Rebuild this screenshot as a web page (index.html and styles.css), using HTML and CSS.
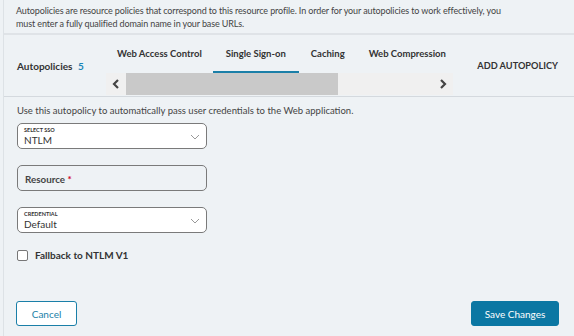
FILE: index.html
```html
<!DOCTYPE html>
<html lang="en">
<head>
    <meta charset="UTF-8">
    <title>Autopolicies</title>
    <link rel="stylesheet" href="styles.css">
</head>
<body>
    <div class="panel">
        <div class="intro">
            Autopolicies are resource policies that correspond to this resource profile. In order for your autopolicies to work effectively, you
            must enter a fully qualified domain name in your base URLs.
        </div>

        <div class="tabbar">
            <div class="title">Autopolicies <span class="count">5</span></div>
            <div class="tabs-wrap">
                <div class="tabs">
                    <div class="tab">Web Access Control</div>
                    <div class="tab active">Single Sign-on</div>
                    <div class="tab">Caching</div>
                    <div class="tab">Web Compression</div>
                </div>
                <div class="scroller">
                    <span class="arrow">
                        <svg width="10" height="10" viewBox="0 0 10 10"><path d="M7 1 L3 5 L7 9" fill="none" stroke="#444" stroke-width="2.2"/></svg>
                    </span>
                    <span class="thumb"></span>
                    <span class="track"></span>
                    <span class="arrow">
                        <svg width="10" height="10" viewBox="0 0 10 10"><path d="M3 1 L7 5 L3 9" fill="none" stroke="#444" stroke-width="2.2"/></svg>
                    </span>
                </div>
            </div>
            <div class="add">ADD AUTOPOLICY</div>
        </div>

        <div class="body">
            <p class="hint">Use this autopolicy to automatically pass user credentials to the Web application.</p>

            <div class="field select">
                <div class="label">SELECT SSO</div>
                <div class="value">NTLM</div>
                <svg class="chev" width="10" height="6" viewBox="0 0 10 6"><path d="M1 1 L5 5 L9 1" fill="none" stroke="#999" stroke-width="1"/></svg>
            </div>

            <div class="field input">
                <span>Resource</span> <span class="req">*</span>
            </div>

            <div class="field select">
                <div class="label">CREDENTIAL</div>
                <div class="value">Default</div>
                <svg class="chev" width="10" height="6" viewBox="0 0 10 6"><path d="M1 1 L5 5 L9 1" fill="none" stroke="#999" stroke-width="1"/></svg>
            </div>

            <label class="check">
                <span class="box"></span>
                Fallback to NTLM V1
            </label>
        </div>

        <div class="footer">
            <button class="btn cancel">Cancel</button>
            <button class="btn save">Save Changes</button>
        </div>
    </div>
</body>
</html>
```

FILE: styles.css
```css
body {
    margin: 0;
    padding: 0;
    font-family: 'Lato', 'Noto Sans', sans-serif;
    background: #eef2f5;
    color: #333;
    width: 574px;
    height: 336px;
    overflow: hidden;
}

.panel {
    margin-left: 3px;
    border-left: 1px solid #dde2e6;
    height: 336px;
    display: flex;
    flex-direction: column;
}

.intro {
    font-size: 9px;
    letter-spacing: -0.12px;
    line-height: 13px;
    color: #444;
    padding: 4px 73px 0 12px;
    height: 29px;
    border-bottom: 2px solid #dfe3e7;
}

.tabbar {
    display: flex;
    height: 61px;
    border-bottom: 1px solid #d4d9de;
}

.title {
    width: 102px;
    padding-left: 13px;
    padding-top: 25px;
    font-size: 10px;
    font-weight: 700;
    color: #333;
    box-sizing: border-box;
    white-space: nowrap;
}

.count {
    color: #1a85b8;
    margin-left: 3px;
}

.tabs-wrap {
    width: 347px;
    display: flex;
    flex-direction: column;
}

.tabs {
    display: flex;
    height: 38px;
    overflow: hidden;
}

.tab {
    font-size: 9.5px;
    font-weight: 700;
    color: #333;
    padding: 13px 12px 0 12px;
    box-sizing: border-box;
    height: 38px;
    white-space: nowrap;
}

.tab.active {
    border-bottom: 2px solid #1a7fa8;
    padding-left: 13px;
    padding-right: 13px;
}

.tab:first-child {
    padding-left: 11px;
    padding-right: 11px;
}

.scroller {
    display: flex;
    height: 22px;
    background: #f0f0f0;
}

.arrow {
    width: 20px;
    display: flex;
    align-items: center;
    justify-content: center;
}

.thumb {
    width: 212px;
    background: #c9c9c9;
}

.track {
    flex: 1;
}

.add {
    flex: 1;
    text-align: right;
    padding-right: 16px;
    padding-top: 25px;
    font-size: 9.2px;
    font-weight: 700;
    color: #333;
    white-space: nowrap;
}

.body {
    padding: 0 13px;
    flex: 1;
}

.hint {
    margin: 8px 0 7px;
    font-size: 9.5px;
    color: #444;
}

.field {
    width: 190px;
    height: 26px;
    border: 1px solid #7a7a7a;
    border-radius: 5px;
    box-sizing: border-box;
    position: relative;
    margin-bottom: 16px;
}

.select {
    background: #fff;
    padding: 3px 6px 0;
}

.label {
    font-size: 5.5px;
    font-weight: 700;
    color: #333;
    line-height: 7px;
}

.value {
    font-size: 10px;
    color: #333;
    line-height: 12px;
}

.chev {
    position: absolute;
    right: 6px;
    top: 10px;
}

.input {
    padding: 7px 7px 0;
    font-size: 9.8px;
    font-weight: 700;
    color: #444;
}

.req {
    color: #d0021b;
}

.check {
    display: flex;
    align-items: center;
    gap: 7px;
    font-size: 10px;
    font-weight: 700;
    color: #333;
    margin-top: 3px;
}

.box {
    width: 9px;
    height: 9px;
    border: 1px solid #777;
    border-radius: 2px;
    background: #fff;
}

.footer {
    display: flex;
    justify-content: space-between;
    padding: 0 15px 10px 12px;
}

.btn {
    height: 25px;
    border-radius: 3px;
    font-family: 'Lato', 'Noto Sans', sans-serif;
    font-size: 10px;
    cursor: pointer;
}

.cancel {
    width: 61px;
    background: #fff;
    border: 1px solid #1a7fa8;
    color: #1a7fa8;
}

.save {
    width: 88px;
    background: #0b77a3;
    border: 1px solid #0b77a3;
    color: #fff;
}
```
